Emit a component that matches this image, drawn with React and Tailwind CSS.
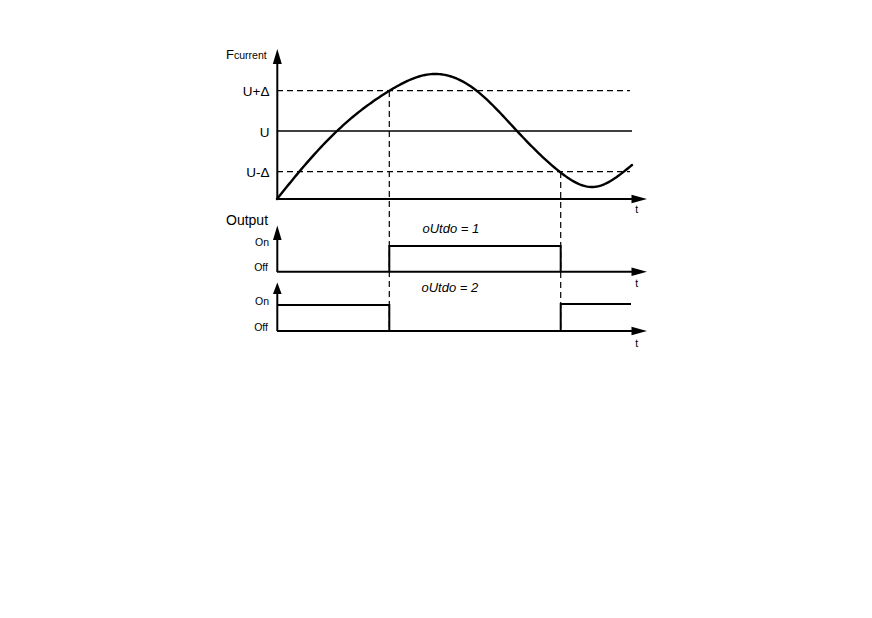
import React from "react";

const P = [
  [277, 199], [299, 172], [337, 131], [389, 91], [433, 74],
  [477, 91], [517, 131], [560, 172], [593, 187], [632, 165],
];

function spline(pts) {
  const n = pts.length;
  const x = pts.map((p) => p[0]);
  const y = pts.map((p) => p[1]);
  const h = [];
  for (let i = 0; i < n - 1; i++) h.push(x[i + 1] - x[i]);
  const a = new Array(n).fill(0), b = new Array(n).fill(1), c = new Array(n).fill(0), r = new Array(n).fill(0);
  for (let i = 1; i < n - 1; i++) {
    a[i] = h[i - 1];
    b[i] = 2 * (h[i - 1] + h[i]);
    c[i] = h[i];
    r[i] = 6 * ((y[i + 1] - y[i]) / h[i] - (y[i] - y[i - 1]) / h[i - 1]);
  }
  // Thomas algorithm
  const cp = new Array(n).fill(0), rp = new Array(n).fill(0);
  cp[0] = c[0] / b[0];
  rp[0] = r[0] / b[0];
  for (let i = 1; i < n; i++) {
    const m = b[i] - a[i] * cp[i - 1];
    cp[i] = c[i] / m;
    rp[i] = (r[i] - a[i] * rp[i - 1]) / m;
  }
  const M = new Array(n).fill(0);
  M[n - 1] = rp[n - 1];
  for (let i = n - 2; i >= 0; i--) M[i] = rp[i] - cp[i] * M[i + 1];
  let d = `M${x[0]},${y[0]}`;
  for (let i = 0; i < n - 1; i++) {
    const steps = Math.max(4, Math.round(h[i] / 2));
    for (let s = 1; s <= steps; s++) {
      const t = (s / steps) * h[i];
      const A = (h[i] - t) / h[i], B = t / h[i];
      const yy =
        A * y[i] + B * y[i + 1] +
        ((A * A * A - A) * M[i] + (B * B * B - B) * M[i + 1]) * (h[i] * h[i]) / 6;
      d += ` L${(x[i] + t).toFixed(2)},${yy.toFixed(2)}`;
    }
  }
  return d;
}

const curve = spline(P);
const font = "'Liberation Sans', Arial, sans-serif";

export default function App() {
  return (
    <div className="w-[872px] h-[618px] bg-white pl-[220px] pt-[40px]">
      <svg width="440" height="320" viewBox="220 40 440 320" className="block">
        <g fontFamily={font} fill="#000">
          <text x="226" y="58.5" fontSize="13">F<tspan fontSize="10.5">current</tspan></text>
          <text x="269.5" y="96.3" fontSize="13.5" textAnchor="end">U+Δ</text>
          <text x="269.5" y="136.5" fontSize="13.5" textAnchor="end">U</text>
          <text x="269.5" y="177" fontSize="13.5" textAnchor="end">U-Δ</text>
          <text x="636.7" y="213" fontSize="10.5" textAnchor="middle">t</text>

          <text x="226" y="225" fontSize="14">Output</text>
          <text x="269" y="245.5" fontSize="10.5" textAnchor="end">On</text>
          <text x="268" y="271" fontSize="10.5" textAnchor="end">Off</text>
          <text x="636.7" y="287" fontSize="10.5" textAnchor="middle">t</text>
          <text x="269" y="305" fontSize="10.5" textAnchor="end">On</text>
          <text x="268" y="331" fontSize="10.5" textAnchor="end">Off</text>
          <text x="636.7" y="346.5" fontSize="10.5" textAnchor="middle">t</text>

          <text x="422.5" y="233" fontSize="13" fontStyle="italic">oUtdo = 1</text>
          <text x="421.5" y="292" fontSize="13" fontStyle="italic">oUtdo = 2</text>
        </g>

        <line x1="277" y1="90.7" x2="630" y2="90.7" stroke="#000" strokeWidth="1.2" strokeDasharray="6 4" />
        <line x1="277" y1="131" x2="632" y2="131" stroke="#000" strokeWidth="1.4" />
        <line x1="277" y1="171.7" x2="630" y2="171.7" stroke="#000" strokeWidth="1.2" strokeDasharray="6 4" />

        <line x1="389.3" y1="91" x2="389.3" y2="331" stroke="#000" strokeWidth="1.2" strokeDasharray="6 4" />
        <line x1="560.7" y1="172" x2="560.7" y2="331" stroke="#000" strokeWidth="1.2" strokeDasharray="6 4" />

        <line x1="277.3" y1="60" x2="277.3" y2="199" stroke="#000" strokeWidth="2" />
        <polygon points="277.3,49 272.8,64 281.8,64" fill="#000" />
        <line x1="277" y1="199" x2="634" y2="199" stroke="#000" strokeWidth="2.2" />
        <polygon points="647,199 631.5,194.8 631.5,203.2" fill="#000" />

        <path d={curve} fill="none" stroke="#000" strokeWidth="2.4" strokeLinecap="round" strokeLinejoin="round" />

        <line x1="277.3" y1="236" x2="277.3" y2="272" stroke="#000" strokeWidth="2" />
        <polygon points="277.3,225.5 273,240 281.6,240" fill="#000" />
        <line x1="277" y1="271.7" x2="634" y2="271.7" stroke="#000" strokeWidth="2" />
        <polygon points="647,271.7 631.5,267.5 631.5,275.9" fill="#000" />
        <polyline points="389.3,271.7 389.3,246 560.7,246 560.7,271.7" fill="none" stroke="#000" strokeWidth="2" />

        <line x1="277.3" y1="291" x2="277.3" y2="331" stroke="#000" strokeWidth="2" />
        <polygon points="277.3,282.5 273,294 281.6,294" fill="#000" />
        <line x1="277" y1="331" x2="634" y2="331" stroke="#000" strokeWidth="2" />
        <polygon points="647,331 631.5,326.8 631.5,335.2" fill="#000" />
        <polyline points="277.3,305 389.3,305 389.3,331" fill="none" stroke="#000" strokeWidth="2" />
        <polyline points="560.7,331 560.7,304 631,304" fill="none" stroke="#000" strokeWidth="2" />
      </svg>
    </div>
  );
}
